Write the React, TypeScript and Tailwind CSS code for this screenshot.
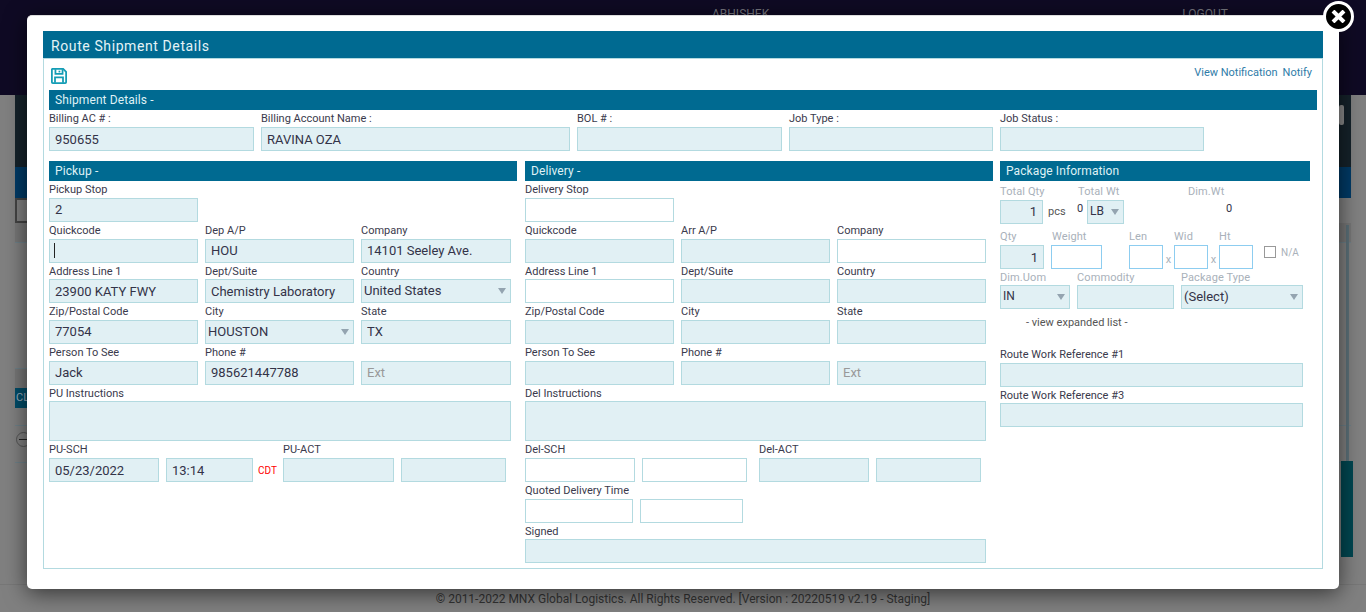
import React from 'react'

const inputBase = 'block h-[24px] border border-[#b3dae0] px-[5px] text-[13px] text-[#333348] outline-none'

const Label: React.FC<{ text: string; height?: string }> = ({ text, height = 'h-[17px]' }) => (
  <div className={`${height} pt-[1px] text-[11px] leading-[16px] text-[#3a3a4c] whitespace-nowrap`}>{text}</div>
)

type FieldProps = {
  label: string
  width: string
  value?: string
  placeholder?: string
  white?: boolean
  lift?: boolean
  labelHeight?: string
}

const Field: React.FC<FieldProps> = ({ label, width, value, placeholder, white, lift, labelHeight }) => (
  <div className={width}>
    <Label text={label} height={labelHeight} />
    <input
      readOnly
      value={value ?? ''}
      placeholder={placeholder}
      className={`${inputBase} w-full ${white ? 'bg-white' : 'bg-[#e1f0f4]'} ${lift ? 'pb-[2px]' : ''} placeholder:text-[#999]`}
    />
  </div>
)

const SectionBar: React.FC<{ title: string }> = ({ title }) => (
  <div className="h-[20px] bg-[#006a91] pl-[6px] text-[12px] leading-[20px] tracking-[0.1px] text-[#dff1f5]">{title}</div>
)

const Caret = () => (
  <svg width="8" height="6" viewBox="0 0 8 6" className="absolute right-[4px] top-[8px]">
    <path d="M0 0h8L4 6z" fill="#94a4b0" />
  </svg>
)

const SelectBox: React.FC<{ value: string; width: string; small?: boolean }> = ({ value, width, small }) => (
  <div className={`relative h-[24px] border border-[#b3dae0] bg-[#e1f0f4] pl-[2px] ${small ? 'text-[12px] leading-[20px]' : 'text-[13px] leading-[22px]'} text-[#333348] ${width}`}>
    {value}
    <Caret />
  </div>
)

const PkgLabel: React.FC<{ text: string; className?: string }> = ({ text, className }) => (
  <div className={`text-[11px] leading-[16px] tracking-[0.1px] text-[#a9b1ba] whitespace-nowrap ${className ?? ''}`}>{text}</div>
)

const blueInput = 'block h-[24px] border border-[#8dcdf0] bg-white outline-none'

const App: React.FC = () => {
  return (
    <div className="relative h-[612px] w-[1366px] overflow-hidden bg-[#808080] font-['Roboto',sans-serif]">
      {/* page behind the modal */}
      <header className="flex h-[95px] bg-[#0f0a24] pt-[5px] text-[12px] text-[#77777f]">
        <span className="ml-[712px]">ABHISHEK</span>
        <span className="ml-[413px]">LOGOUT</span>
      </header>
      <div className="mx-[15px]">
        <div className="flex h-[72px] justify-end bg-[#15222a] pt-[10px]">
          <div className="mr-[7px] h-[20px] w-[5px] rounded-[2px] bg-[#8a8a8a]" />
        </div>
        <div className="h-[31px] bg-[#003a66]" />
        <div className="h-[25px] w-[60px] border-2 border-[#444] bg-[#808080]" />
        <div className="h-[20px] border-b border-[#6e8088] bg-[#777]" />
        <div className="mt-[125px] h-[20px] w-[60px] border-t border-[#6e8088] bg-[#777]" />
        <div className="h-[20px] w-[60px] bg-[#004c68] pl-[1px] text-[11px] leading-[20px] text-[#9ab]">CLOSE</div>
        <div className="mt-[17px] border-t border-[#6e8088] pt-[6px] pl-[1px]">
          <div className="flex h-[15px] w-[15px] items-center justify-center rounded-full border border-[#555]">
            <div className="h-[1px] w-[9px] bg-[#222]" />
          </div>
        </div>
        <div className="mt-[15px] border-t border-[#6e8088]" />
      </div>
      <footer className="absolute bottom-0 left-0 h-[28px] w-full border-t border-[#777] pt-[6px] text-center text-[12px] leading-[16px] text-[#333]">
        © 2011-2022 MNX Global Logistics. All Rights Reserved. [Version : 20220519 v2.19 - Staging]
      </footer>
      <div className="absolute left-[1346px] top-[225px] h-[327px] w-[3px] bg-[#5c7078]" />
      <div className="absolute left-[1341px] top-[461px] h-[96px] w-[12px] bg-[#004650]" />

      {/* modal */}
      <div className="absolute left-[27px] top-[15px] h-[574px] w-[1312px] rounded-[5px] border-t border-[#ddd] bg-white px-[16px] pt-[15px] shadow-[0_4px_22px_rgba(0,0,0,0.6)]">
        <div className="h-[27px] bg-[#006a91] pl-[8px] text-[14px] leading-[31px] tracking-[0.6px] text-[#e4f3f6]">Route Shipment Details</div>
        <div className="h-[511px] border border-[#b3dae0] px-[5px]">
          <div className="flex h-[31px] justify-between pr-[5px]">
            <svg width="16" height="16" viewBox="0 0 18 18" className="ml-[2px] mt-[9px]" fill="none" stroke="#159db5" strokeWidth="2">
              <path d="M1.500 1h12.200L17 4.300V16a1 1 0 0 1-1 1H2a1 1 0 0 1-1-1V1.500z" />
              <path d="M5 1.500v5h8v-5M4.500 16.500V10.500h9v6" />
              <path d="M9.500 3v2" />
            </svg>
            <div className="mt-[6px] flex gap-[5px] text-[11px] leading-[16px] text-[#2f7ca8]">
              <span>View Notification</span>
              <span>Notify</span>
            </div>
          </div>
          <SectionBar title="Shipment Details -" />
          <div className="flex gap-[7px]">
            <Field label="Billing AC # :" value="950655" width="w-[205px]" />
            <Field label="Billing Account Name :" value="RAVINA OZA" width="w-[309px]" />
            <Field label="BOL # :" width="w-[205px]" />
            <Field label="Job Type :" width="w-[204px]" />
            <Field label="Job Status :" width="w-[204px]" />
          </div>

          <div className="mt-[10px] flex">
            {/* pickup */}
            <section className="mr-[8px] w-[468px]">
              <SectionBar title="Pickup -" />
              <Field label="Pickup Stop" value="2" lift width="w-[149px]" />
              <div className="flex gap-[7px]">
                <div className="relative">
                  <Field label="Quickcode" width="w-[149px]" />
                  <div className="absolute left-[5px] top-[21px] h-[15px] w-[1px] bg-[#222]" />
                </div>
                <Field label="Dep A/P" value="HOU" lift width="w-[149px]" />
                <Field label="Company" value="14101 Seeley Ave." lift width="w-[150px]" />
              </div>
              <div className="flex gap-[7px]">
                <Field label="Address Line 1" labelHeight="h-[16px]" value="23900 KATY FWY" width="w-[149px]" />
                <Field label="Dept/Suite" labelHeight="h-[16px]" value="Chemistry Laboratory" width="w-[149px]" />
                <div className="w-[150px]">
                  <Label text="Country" height="h-[16px]" />
                  <SelectBox value="United States" width="w-full" />
                </div>
              </div>
              <div className="flex gap-[7px]">
                <Field label="Zip/Postal Code" value="77054" lift width="w-[149px]" />
                <div className="w-[149px]">
                  <Label text="City" />
                  <SelectBox value="HOUSTON" width="w-full" />
                </div>
                <Field label="State" value="TX" lift width="w-[150px]" />
              </div>
              <div className="flex gap-[7px]">
                <Field label="Person To See" value="Jack" lift width="w-[149px]" />
                <Field label="Phone #" value="985621447788" lift width="w-[149px]" />
                <Field label=" " placeholder="Ext" lift width="w-[150px]" />
              </div>
              <Label text="PU Instructions" height="h-[16px]" />
              <textarea readOnly className="block h-[40px] w-[462px] resize-none border border-[#b3dae0] bg-[#e1f0f4] outline-none" />
              <div className="flex">
                <Field label="PU-SCH" value="05/23/2022" width="w-[110px]" />
                <Field label=" " value="13:14" width="ml-[7px] w-[87px]" />
                <span className="ml-[5px] mt-[24px] w-[25px] text-[10px] leading-[12px] text-[#f00]">CDT</span>
                <Field label="PU-ACT" width="w-[111px]" />
                <Field label=" " width="ml-[7px] w-[105px]" />
              </div>
            </section>

            {/* delivery */}
            <section className="mr-[7px] w-[468px]">
              <SectionBar title="Delivery -" />
              <Field label="Delivery Stop" white width="w-[149px]" />
              <div className="flex gap-[7px]">
                <Field label="Quickcode" width="w-[149px]" />
                <Field label="Arr A/P" width="w-[149px]" />
                <Field label="Company" white width="w-[149px]" />
              </div>
              <div className="flex gap-[7px]">
                <Field label="Address Line 1" labelHeight="h-[16px]" white width="w-[149px]" />
                <Field label="Dept/Suite" labelHeight="h-[16px]" width="w-[149px]" />
                <Field label="Country" labelHeight="h-[16px]" width="w-[149px]" />
              </div>
              <div className="flex gap-[7px]">
                <Field label="Zip/Postal Code" width="w-[149px]" />
                <Field label="City" width="w-[149px]" />
                <Field label="State" width="w-[149px]" />
              </div>
              <div className="flex gap-[7px]">
                <Field label="Person To See" width="w-[149px]" />
                <Field label="Phone #" width="w-[149px]" />
                <Field label=" " placeholder="Ext" lift width="w-[149px]" />
              </div>
              <Label text="Del Instructions" height="h-[16px]" />
              <textarea readOnly className="block h-[40px] w-[461px] resize-none border border-[#b3dae0] bg-[#e1f0f4] outline-none" />
              <div className="flex">
                <Field label="Del-SCH" white width="w-[110px]" />
                <Field label=" " white width="ml-[7px] w-[105px]" />
                <Field label="Del-ACT" width="ml-[12px] w-[110px]" />
                <Field label=" " width="ml-[7px] w-[105px]" />
              </div>
              <div className="flex">
                <Field label="Quoted Delivery Time" white width="w-[108px]" />
                <Field label=" " white width="ml-[7px] w-[103px]" />
              </div>
              <Field label="Signed" labelHeight="h-[16px]" width="w-[461px]" />
            </section>

            {/* package */}
            <section className="w-[310px]">
              <SectionBar title="Package Information" />
              <div className="flex items-start pt-[3px]">
                <div className="w-[43px]">
                  <PkgLabel text="Total Qty" />
                  <input readOnly value="1" className={`${inputBase} w-full bg-[#e1f0f4] pb-[2px] text-right`} />
                </div>
                <span className="ml-[5px] mt-[20px] w-[29px] text-[11px] leading-[16px] text-[#555]">pcs</span>
                <div className="w-[47px]">
                  <PkgLabel text="Total Wt" className="ml-[1px]" />
                  <div className="flex items-start">
                    <span className="mt-[1px] w-[10px] text-[11px] leading-[16px] text-[#333348]">0</span>
                    <SelectBox value="LB" small width="w-[37px]" />
                  </div>
                </div>
                <div className="ml-[64px]">
                  <PkgLabel text="Dim.Wt" />
                  <div className="ml-[38px] mt-[1px] text-[11px] leading-[16px] text-[#333348]">0</div>
                </div>
              </div>
              <div className="mt-[5px] flex items-start text-[11px] text-[#a9b1ba]">
                <div className="w-[44px]">
                  <PkgLabel text="Qty" />
                  <input readOnly value="1" className={`${inputBase} w-full bg-[#e1f0f4] text-right`} />
                </div>
                <div className="ml-[7px] w-[51px]">
                  <PkgLabel text="Weight" className="ml-[1px]" />
                  <input readOnly className={`${blueInput} w-full`} />
                </div>
                <div className="ml-[27px] w-[34px]">
                  <PkgLabel text="Len" />
                  <input readOnly className={`${blueInput} w-full`} />
                </div>
                <span className="mt-[25px] w-[11px] text-center leading-[12px]">x</span>
                <div className="w-[34px]">
                  <PkgLabel text="Wid" />
                  <input readOnly className={`${blueInput} w-full`} />
                </div>
                <span className="mt-[25px] w-[11px] text-center leading-[12px]">x</span>
                <div className="w-[34px]">
                  <PkgLabel text="Ht" />
                  <input readOnly className={`${blueInput} w-full`} />
                </div>
                <div className="ml-[11px] mt-[17px] h-[12px] w-[12px] border border-[#999] bg-white" />
                <span className="ml-[5px] mt-[18px] text-[10px] leading-[12px]">N/A</span>
              </div>
              <div className="flex gap-[7px]">
                <div className="w-[70px]">
                  <PkgLabel text="Dim.Uom" className="h-[16px] pt-[1px]" />
                  <SelectBox value="IN" small width="w-full" />
                </div>
                <div className="w-[97px]">
                  <PkgLabel text="Commodity" className="h-[16px] pt-[1px]" />
                  <input readOnly className={`${inputBase} w-full bg-[#e1f0f4]`} />
                </div>
                <div className="w-[122px]">
                  <PkgLabel text="Package Type" className="h-[16px] pt-[1px]" />
                  <SelectBox value="(Select)" width="w-full" />
                </div>
              </div>
              <div className="ml-[26px] mt-[6px] text-[11px] leading-[16px] text-[#555]">- view expanded list -</div>
              <Field label="Route Work Reference #1" labelHeight="h-[17px] mt-[15px]" width="w-[303px]" />
              <Field label="Route Work Reference #3" labelHeight="h-[16px]" width="w-[303px]" />
            </section>
          </div>
        </div>
      </div>

      {/* close button */}
      <button className="absolute left-[1323px] top-[1px] flex h-[31px] w-[31px] items-center justify-center rounded-full border-[3px] border-white bg-black">
        <svg width="15" height="13" viewBox="0 0 15 13" fill="none" stroke="#fff" strokeWidth="4">
          <path d="M2 1l11 11M13 1L2 12" />
        </svg>
      </button>
    </div>
  )
}

export default App
